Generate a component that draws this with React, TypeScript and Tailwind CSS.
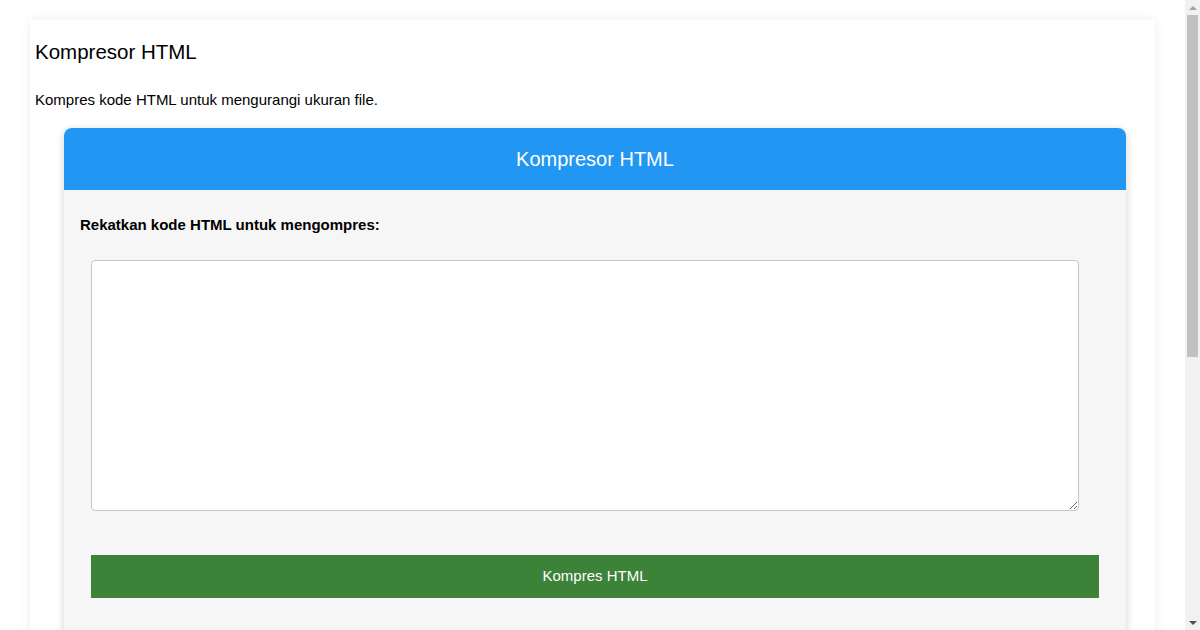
const Scrollbar = () => (
  <div className="w-[15px] shrink-0 h-full bg-[#f1f1f1] flex flex-col">
    <div className="h-[15px] flex items-center justify-center">
      <div className="w-0 h-0 border-x-[4px] border-x-transparent border-b-[4px] border-b-[#a3a3a3]" />
    </div>
    <div className="h-[342px] mx-[2px] bg-[#c1c1c1]" />
    <div className="flex-1" />
    <div className="h-[15px] flex items-center justify-center">
      <div className="w-0 h-0 border-x-[4px] border-x-transparent border-t-[4px] border-t-[#505050]" />
    </div>
  </div>
);

const App = () => {
  return (
    <div
      className="h-[630px] flex overflow-hidden bg-white text-black"
      style={{ fontFamily: '"Liberation Sans", Arial, sans-serif' }}
    >
      <div className="flex-1 min-w-0 px-[30px] pt-[20px]">
        <div className="bg-white px-[5px] pt-[20px] pb-[30px] shadow-[0_0_10px_rgba(0,0,0,0.08)]">
          {/* Page heading */}
          <h1 className="text-[20.5px] leading-[23px] font-normal">Kompresor HTML</h1>
          <p className="mt-[28px] text-[15px] leading-[17px]">
            Kompres kode HTML untuk mengurangi ukuran file.
          </p>

          {/* Tool card */}
          <div className="mt-[20px] ml-[29px] mr-[24px] rounded-[8px] overflow-hidden shadow-[0_2px_8px_rgba(0,0,0,0.18)]">
            <div className="h-[62px] bg-[#2196f3] flex items-center justify-center text-white text-[20px] leading-[23px]">
              Kompresor HTML
            </div>
            <div className="bg-[#f6f6f6] px-[16px] pt-[26px] pb-[80px]">
              <label className="block text-[15px] leading-[17px] font-bold">
                Rekatkan kode HTML untuk mengompres:
              </label>
              <textarea className="block mt-[27px] ml-[11px] w-[988px] h-[251px] bg-white border border-[#c8c8c8] rounded-[4px] p-[10px] text-[14px] outline-none" />
              <button className="block mt-[44px] ml-[11px] w-[1008px] h-[43px] pb-[2px] bg-[#3c8239] text-white text-[15px] leading-[17px]">
                Kompres HTML
              </button>
            </div>
          </div>
        </div>
      </div>
      <Scrollbar />
    </div>
  );
};

export default App;
